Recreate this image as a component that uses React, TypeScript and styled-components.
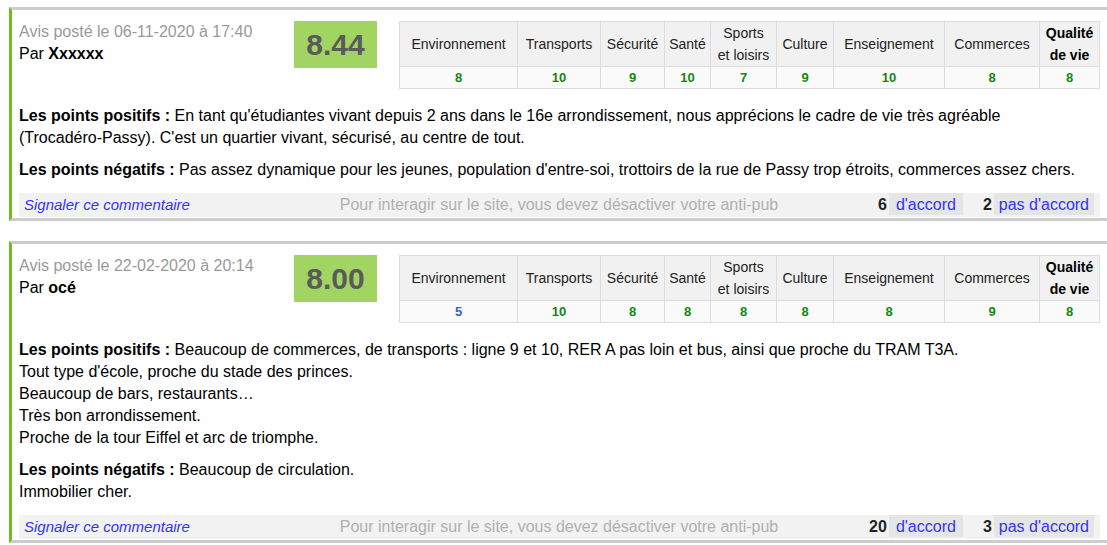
import styled, { createGlobalStyle } from "styled-components";

const GlobalStyle = createGlobalStyle`
  html, body {
    margin: 0;
    padding: 0;
    background: #fff;
  }
  body {
    font-family: "Liberation Sans", Arial, sans-serif;
    color: #000;
  }
`;

type Rating = { label: string; value: number; bold?: boolean };

type Review = {
  date: string;
  author: string;
  score: string;
  ratings: Rating[];
  positive: string[];
  negative: string[];
  agree: number;
  disagree: number;
};

const columns = [118, 83, 64, 46, 66, 57, 111, 95, 60];

const labels = [
  "Environnement",
  "Transports",
  "Sécurité",
  "Santé",
  "Sports<br>et loisirs",
  "Culture",
  "Enseignement",
  "Commerces",
  "Qualité<br>de vie",
];

const makeRatings = (values: number[]): Rating[] =>
  values.map((value, i) => ({ label: labels[i], value, bold: i === labels.length - 1 }));

const reviews: Review[] = [
  {
    date: "06-11-2020 à 17:40",
    author: "Xxxxxx",
    score: "8.44",
    ratings: makeRatings([8, 10, 9, 10, 7, 9, 10, 8, 8]),
    positive: [
      "En tant qu'étudiantes vivant depuis 2 ans dans le 16e arrondissement, nous apprécions le cadre de vie très agréable <nobr>(Trocadéro-Passy).</nobr> C'est un quartier vivant, sécurisé, au centre de tout.",
    ],
    negative: [
      "Pas assez dynamique pour les jeunes, population d'entre-soi, trottoirs de la rue de Passy trop étroits, commerces assez chers.",
    ],
    agree: 6,
    disagree: 2,
  },
  {
    date: "22-02-2020 à 20:14",
    author: "océ",
    score: "8.00",
    ratings: makeRatings([5, 10, 8, 8, 8, 8, 8, 9, 8]),
    positive: [
      "Beaucoup de commerces, de transports : ligne 9 et 10, RER A pas loin et bus, ainsi que proche du TRAM T3A.",
      "Tout type d'école, proche du stade des princes.",
      "Beaucoup de bars, restaurants…",
      "Très bon arrondissement.",
      "Proche de la tour Eiffel et arc de triomphe.",
    ],
    negative: ["Beaucoup de circulation.", "Immobilier cher."],
    agree: 20,
    disagree: 3,
  },
];

// the site's comments come as html with <br> between lines
const toHtml = (title: string, lines: string[]) =>
  `<b>${title}</b> ` + lines.join("<br>");

export default function App() {
  return (
    <Page>
      <GlobalStyle />
      {reviews.map((r) => (
        <Card key={r.date}>
          <Head>
            <Meta>
              <Posted>Avis posté le {r.date}</Posted>
              <Author>
                Par <b>{r.author}</b>
              </Author>
            </Meta>
            <Score>{r.score}</Score>
            <Grid>
              <colgroup>
                {columns.map((w, i) => (
                  <Col key={i} $w={w} />
                ))}
              </colgroup>
              <tbody>
                <tr>
                  {r.ratings.map((rt) => (
                    <Th
                      key={rt.label}
                      $bold={rt.bold}
                      dangerouslySetInnerHTML={{ __html: rt.label }}
                    />
                  ))}
                </tr>
                <tr>
                  {r.ratings.map((rt) => (
                    <Td key={rt.label} $low={rt.value < 7}>
                      {rt.value}
                    </Td>
                  ))}
                </tr>
              </tbody>
            </Grid>
          </Head>

          <Text dangerouslySetInnerHTML={{ __html: toHtml("Les points positifs :", r.positive) }} />
          <Text dangerouslySetInnerHTML={{ __html: toHtml("Les points négatifs :", r.negative) }} />

          <Footer>
            <Report>Signaler ce commentaire</Report>
            <Notice>Pour interagir sur le site, vous devez désactiver votre anti-pub</Notice>
            <Votes>
              <Count>{r.agree}</Count>
              <VoteLink $wide>d'accord</VoteLink>
              <Count $gap>{r.disagree}</Count>
              <VoteLink>pas d'accord</VoteLink>
            </Votes>
          </Footer>
        </Card>
      ))}
    </Page>
  );
}

const Page = styled.div`
  padding: 7px 0 0 9px;
  width: 1098px;
`;

const Card = styled.div`
  border-top: 3px solid #cccccc;
  border-bottom: 3px solid #cccccc;
  border-left: 3px solid #6cbf1f;
  padding: 11px 7px 1px 7px;
  margin-bottom: 20px;
  font-size: 16px;
  line-height: 22px;
`;

const Head = styled.div`
  display: flex;
  align-items: flex-start;
  margin-bottom: 16px;
`;

const Meta = styled.div`
  flex: 1;
`;

const Posted = styled.div`
  color: #999999;
`;

const Author = styled.div`
  color: #000;

  b {
    font-weight: bold;
  }
`;

const Score = styled.div`
  width: 83px;
  height: 47px;
  margin-right: 22px;
  background: #a2d462;
  color: #5a5a5a;
  font-size: 30px;
  font-weight: bold;
  display: flex;
  align-items: center;
  justify-content: center;
`;

const Grid = styled.table`
  width: 700px;
  table-layout: fixed;
  border-collapse: collapse;
  border: 1px solid #dddddd;
`;

const Col = styled.col<{ $w: number }>`
  width: ${(p) => p.$w}px;
`;

const Th = styled.td<{ $bold?: boolean }>`
  border: 1px solid #dddddd;
  background: #f1f1f1;
  text-align: center;
  font-size: 14px;
  line-height: 22px;
  height: 44px;
  padding: 0;
  color: ${(p) => (p.$bold ? "#000" : "#222")};
  font-weight: ${(p) => (p.$bold ? "bold" : "normal")};
`;

const Td = styled.td<{ $low?: boolean }>`
  border: 1px solid #dddddd;
  background: #fafafa;
  text-align: center;
  font-size: 13px;
  font-weight: bold;
  line-height: 21px;
  padding: 0;
  color: ${(p) => (p.$low ? "#3366cc" : "#118811")};
`;

const Text = styled.p`
  margin: 0 0 10px 0;

  &:last-of-type {
    margin-bottom: 12px;
  }

  nobr {
    white-space: nowrap;
  }
`;

const Footer = styled.div`
  display: grid;
  grid-template-columns: 1fr auto 1fr;
  align-items: start;
  height: 24px;
  background: #f2f2f2;
  padding: 0 6px 0 5px;
  line-height: 22px;
`;

const Report = styled.a`
  font-style: italic;
  font-size: 15px;
  color: #3333ff;
  line-height: 24px;
`;

const Notice = styled.span`
  color: #b0b0b0;
  line-height: 24px;
`;

const Votes = styled.div`
  display: flex;
  justify-content: flex-end;
  align-items: flex-start;
`;

const Count = styled.span<{ $gap?: boolean }>`
  font-weight: bold;
  color: #222;
  margin-left: ${(p) => (p.$gap ? "20px" : "0")};
  padding-right: 2px;
  line-height: 24px;
`;

const VoteLink = styled.a<{ $wide?: boolean }>`
  background: #e5e5e5;
  color: #3333ff;
  padding: ${(p) => (p.$wide ? "0 7px" : "0 5px")};
  height: 22px;
  line-height: 24px;
  overflow: hidden;
`;
